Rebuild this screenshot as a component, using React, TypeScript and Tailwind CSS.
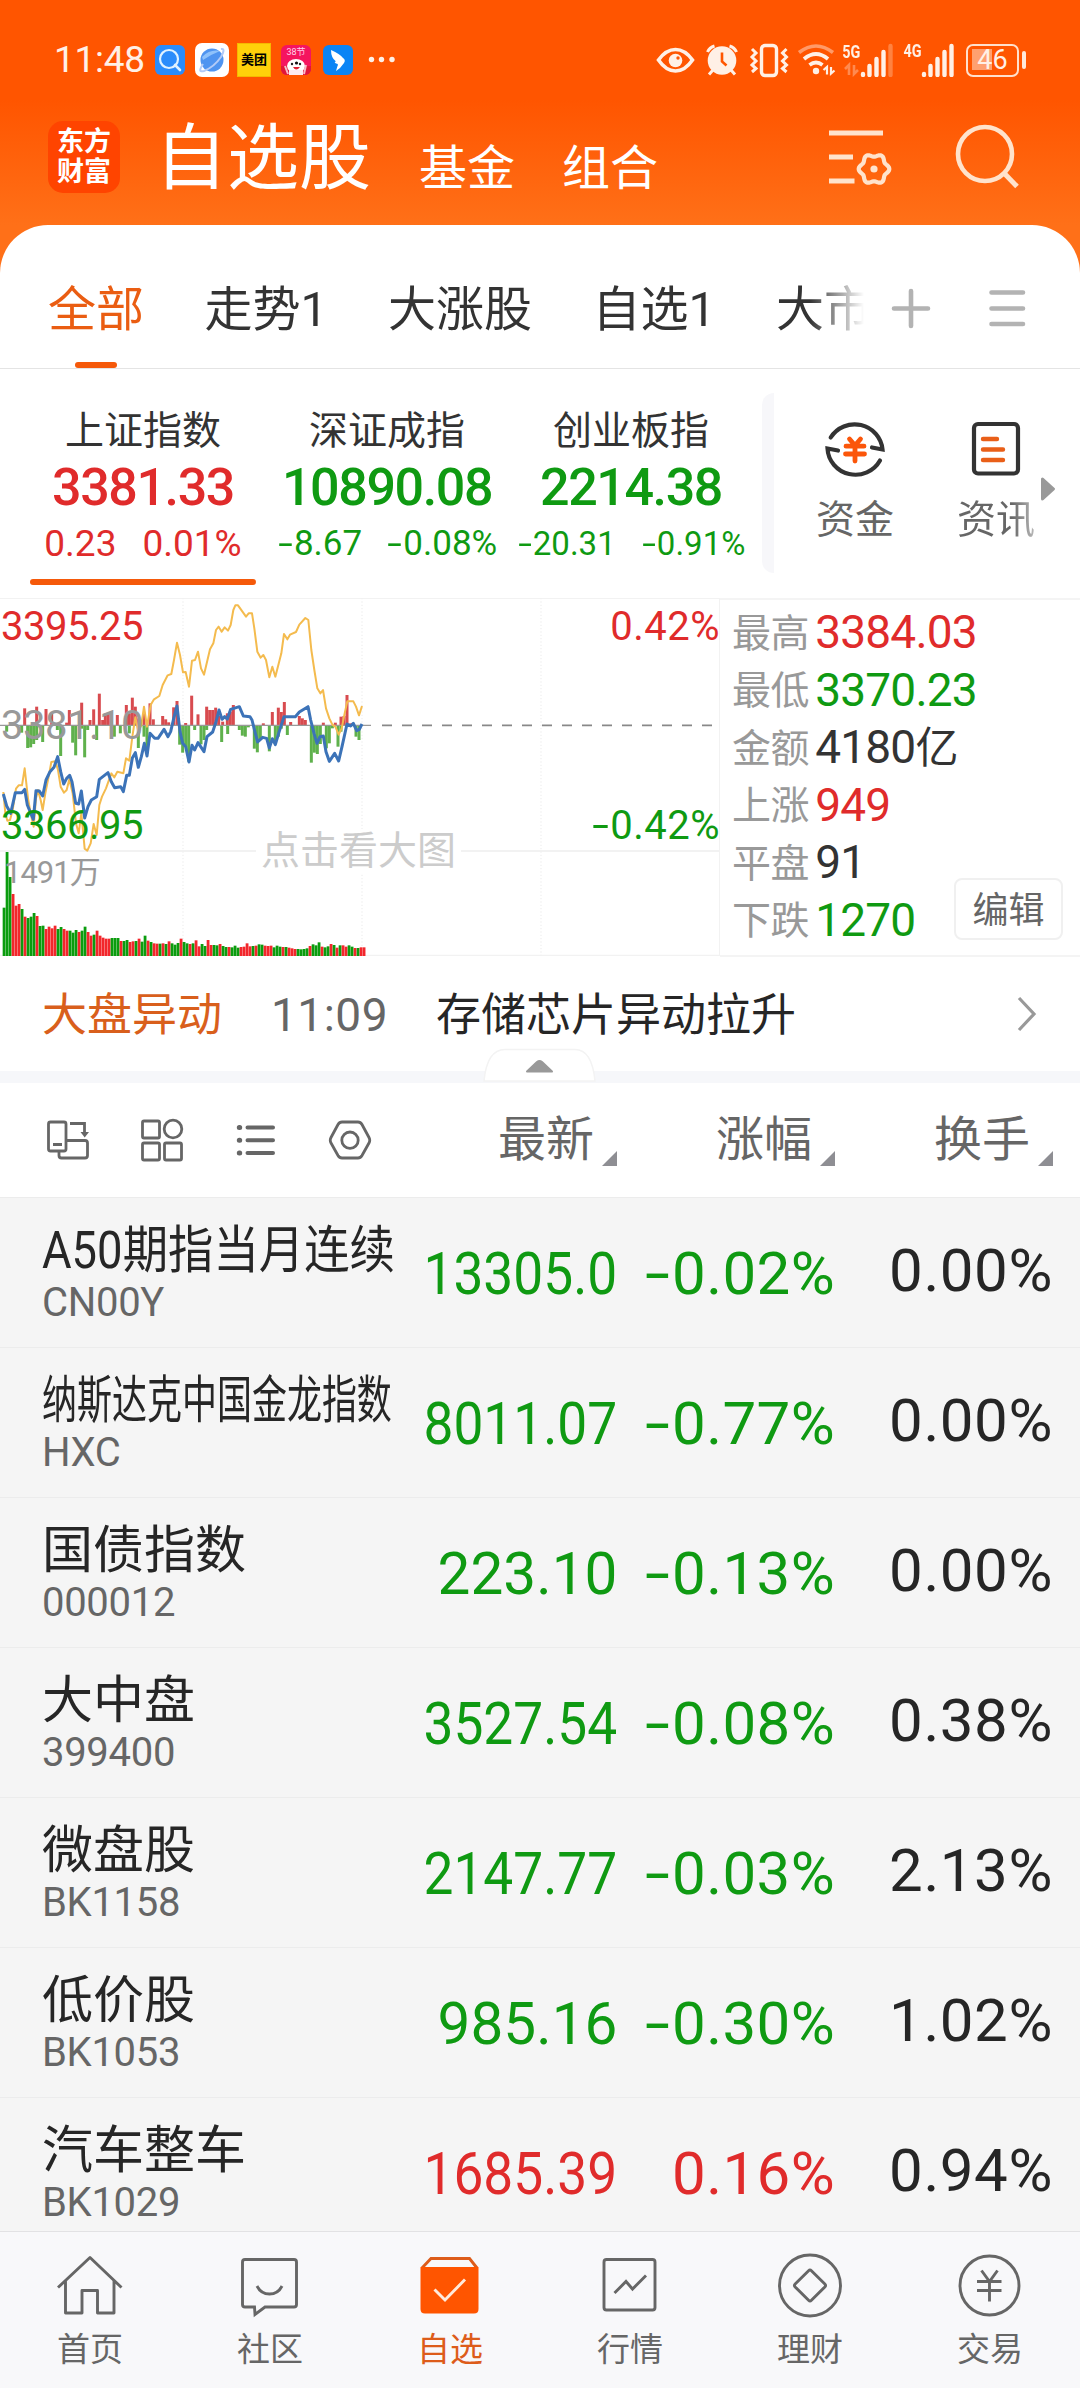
import type { ReactNode } from 'react';

const RED = 'text-[#e02b2b]';
const GREEN = 'text-[#0f9a12]';

/* A number whose leading minus is drawn as a wider, centred dash. */
function Num({ v }: { v: string }) {
  if (v[0] !== '-') return <>{v}</>;
  return (
    <>
      <span className="inline-block w-[0.49em] scale-x-[1.5] text-center">-</span>
      {v.slice(1)}
    </>
  );
}

function Icon({ box, className, children }: { box: string; className: string; children: ReactNode }) {
  return (
    <svg viewBox={box} className={'shrink-0 ' + className} fill="none" stroke="currentColor">
      {children}
    </svg>
  );
}

function StatusBar() {
  return (
    <div className="flex h-[120px] items-center pl-[54px] text-[#fff0e6]">
      <span className="w-[101px] text-[37px] tracking-[-0.3px]">11:48</span>
      <Icon box="0 0 30 30" className="h-[30px] w-[30px]">
        <rect width="30" height="30" rx="6" fill="#2a8cfb" stroke="none" />
        <circle cx="14" cy="14" r="9" stroke="#dff2ff" strokeWidth="2.2" />
        <path d="M20 20l5 5" stroke="#dff2ff" strokeWidth="2.6" strokeLinecap="round" />
      </Icon>
      <Icon box="0 0 34 34" className="ml-[10px] h-[34px] w-[34px]">
        <rect width="34" height="34" rx="7" fill="#fff" stroke="none" />
        <circle cx="17" cy="17" r="11.5" fill="#4f94f0" stroke="none" />
        <path d="M7 14q8-8 18-6q-8 3-17 9z" fill="#8fc2fb" stroke="none" />
        <path d="M8 21Q2 30 9 28Q19 24 26 14Q31 5 26 6" stroke="#b3cbf7" strokeWidth="2" />
      </Icon>
      <span className="ml-2 flex h-[34px] w-[34px] items-center justify-center border border-[#f5b800] bg-[#ffd00a] text-[13px] font-bold text-black">
        美团
      </span>
      <span className="ml-[10px] flex h-[30px] w-[30px] flex-col items-center overflow-hidden rounded-md bg-[#f5145f]">
        <span className="h-[13px] text-[9px] leading-[15px] text-[#ffd0ec]">38节</span>
        <Icon box="0 0 30 17" className="h-[17px] w-[30px]">
          <path d="M0 8h30v9H0z" fill="#e0163a" stroke="none" />
          <ellipse cx="15" cy="8" rx="9" ry="7" fill="#fff" stroke="none" />
          <path d="M8 12h14v5H8z" fill="#fdebf0" stroke="none" />
          <circle cx="11" cy="6" r="1.2" fill="#222" stroke="none" />
          <circle cx="19" cy="6" r="1.2" fill="#222" stroke="none" />
          <circle cx="15.500" cy="5" r="1.6" fill="#111" stroke="none" />
          <path d="M12 9q3 5 7 0z" fill="#e02034" stroke="none" />
          <path d="M25 7l-2 9M4 8l3 8" stroke="#f9b8c8" strokeWidth="2" />
        </Icon>
      </span>
      <Icon box="0 0 30 30" className="ml-3 h-[30px] w-[30px]">
        <rect width="30" height="30" rx="6" fill="#0a84f5" stroke="none" />
        <path d="M8 5Q17 9 20 13Q23 15 21 18L17 23L13 26L14.500 21Q16 19 13 18.500Q10.500 17 13 16.500Q8 13 8 5Z" fill="#fff" stroke="none" />
      </Icon>
      <Icon box="0 0 28 8" className="ml-[15px] h-[8px] w-[28px]">
        <g fill="currentColor" stroke="none">
          <circle cx="3.500" cy="3.500" r="2.7" />
          <circle cx="13.500" cy="3.500" r="2.7" />
          <circle cx="24" cy="3.500" r="2.7" />
        </g>
      </Icon>

      <Icon box="656 40 42 40" className="ml-[259px] h-[40px] w-[42px]">
        <path d="M659.500 60Q667 49.500 676.500 49.500T693.500 60Q686 71 676.500 71T659.500 60Z" strokeWidth="3.600" />
        <circle cx="676.500" cy="60.500" r="6.8" fill="currentColor" stroke="none" />
        <circle cx="679" cy="58" r="1.7" fill="#ff5500" stroke="none" />
      </Icon>
      <Icon box="704 40 40 40" className="ml-[6px] h-[40px] w-[40px]">
        <circle cx="723" cy="60.500" r="14.300" fill="currentColor" stroke="none" />
        <path d="M723 52.500V61.500l4.500 4" stroke="#ff5500" strokeWidth="2.6" />
        <path d="M708.500 52q2-4.500 7-6M737.500 52q-2-4.500-7-6M714 70l-4 4.500M732 70l4 4.500" strokeWidth="3" />
      </Icon>
      <Icon box="748 40 44 40" className="ml-1 h-[40px] w-[44px]">
        <rect x="762.500" y="45.500" width="15" height="30" rx="3.500" strokeWidth="3.400" />
        <path d="M753 49l4 4-4 4 4 4-4 4 4 3.500-4 3.500M787.500 49l-4 4 4 4-4 4 4 4-4 3.500 4 3.500" strokeWidth="3" />
      </Icon>
      <Icon box="796 40 42 40" className="ml-1 h-[40px] w-[42px]">
        <path d="M800 52.500q17-13 34 0" stroke="#ff9a68" strokeWidth="3.600" />
        <path d="M805 59q12-10 24 0M810.500 65q6.500-5 13 0" strokeWidth="3.800" />
        <circle cx="817" cy="71" r="3.200" fill="currentColor" stroke="none" />
        <path d="M824.500 70l3.500-3V74.500M835.500 70.500l-3.500 3V67" strokeWidth="2.200" />
      </Icon>
      <div className="ml-[6px] flex h-[34px] items-end">
        <div className="flex w-[17px] flex-col items-center">
          <span className="h-[15px] scale-x-[0.8] text-[18px] font-bold leading-[16px]">5G</span>
          <Icon box="0 0 16 16" className="mt-[2px] h-[16px] w-[16px] text-[#ff8a50]">
            <path d="M1 8l4-4v10M14 9l-4 4V4" strokeWidth="2.600" />
          </Icon>
        </div>
        <Icon box="0 0 34 34" className="h-[34px] w-[34px]">
          <path d="M3 32v-1M9.500 32v-9M16.500 32V16M23.500 32V9" strokeWidth="4.400" strokeLinecap="round" />
          <path d="M30.500 32V3" stroke="#ff8240" strokeWidth="4.400" strokeLinecap="round" />
        </Icon>
      </div>
      <div className="ml-[10px] flex h-[34px] items-start">
        <span className="flex w-[17px] scale-x-[0.8] justify-center text-[18px] font-bold leading-[16px]">4G</span>
        <Icon box="0 0 34 34" className="h-[34px] w-[34px]">
          <path d="M3 32v-1M9.500 32v-9M16.500 32V16M23.500 32V9M30.500 32V3" strokeWidth="4.400" strokeLinecap="round" />
        </Icon>
      </div>
      <div className="ml-[11px] flex items-center gap-[3px]">
        <div className="flex h-[33px] w-[53px] items-center rounded-[7px] border-[2.5px] border-[#ffe0cc] bg-[linear-gradient(#ffa070,#ffa070)] bg-[length:20px_21px] bg-[position:4px_3.500px] bg-no-repeat">
          <span className="w-full text-center text-[27px] leading-none">46</span>
        </div>
        <div className="h-[18px] w-[4px] rounded-sm bg-[#ffe8d9]" />
      </div>
    </div>
  );
}

const gearPath =
  Array.from({ length: 72 }, (_, i) => {
    const a = (i * Math.PI) / 36;
    const r = 13.8 + 1.5 * Math.cos(6 * a);
    return (i ? 'L' : 'M') + (876 + r * Math.cos(a)).toFixed(2) + ' ' + (169 + r * Math.sin(a)).toFixed(2);
  }).join('') + 'Z';

function Header() {
  return (
    <div className="flex h-[105px] items-start text-white">
      <div className="ml-[48px] mt-[1px] flex h-[72px] w-[72px] flex-col items-center justify-center rounded-[15px] bg-[#ff4400] text-[27px] font-bold leading-[30px]">
        <span>东方</span>
        <span>财富</span>
      </div>
      <span className="ml-[35px] text-[72px] leading-[78px]">自选股</span>
      <span className="ml-[48px] mt-[20px] text-[48px] leading-[58px]">基金</span>
      <span className="ml-[47px] mt-[20px] text-[48px] leading-[58px]">组合</span>
      <Icon box="826 120 72 72" className="ml-[166px] h-[72px] w-[72px] text-[#ffe3cc]">
        <path d="M831 133H885M831 157H855M831 181H856.500" strokeWidth="5" />
        <path d={gearPath} strokeWidth="4.200" strokeLinejoin="round" />
        <circle cx="876" cy="169" r="3.600" fill="currentColor" stroke="none" />
      </Icon>
      <Icon box="952 120 72 72" className="ml-[54px] h-[72px] w-[72px] text-[#ffe3cc]">
        <circle cx="987" cy="154" r="27" strokeWidth="4.600" />
        <path d="M1005 172L1019 186.500" strokeWidth="5" />
      </Icon>
    </div>
  );
}

function GroupTabs() {
  return (
    <div className="flex h-[144px] items-start border-b border-[#e4e4e4] text-[48px] text-[#333]">
      <div className="flex w-[874px] shrink-0 gap-[60.500px] whitespace-nowrap pl-[48px] [mask-image:linear-gradient(90deg,#000_810px,transparent_864px)]">
        <div className="flex flex-col items-center text-[#ea5d12]">
          <span className="mt-[52px] h-[66px] leading-[66px]">全部</span>
          <span className="mt-[19px] h-[6px] w-[42px] rounded-full bg-[#f5590a]" />
        </div>
        <span className="mt-[52px] leading-[66px]">走势1</span>
        <span className="mt-[52px] leading-[66px]">大涨股</span>
        <span className="mt-[52px] leading-[66px]">自选1</span>
        <span className="mt-[52px] leading-[66px]">大市</span>
      </div>
      <Icon box="890 286 44 44" className="ml-[15px] mt-[61px] h-[44px] w-[44px] text-[#b3b3b3]">
        <path d="M895 308.500H929M912 291V326" strokeWidth="4.600" strokeLinecap="round" />
      </Icon>
      <Icon box="986 286 44 44" className="ml-[52px] mt-[61px] h-[44px] w-[44px] text-[#b3b3b3]">
        <path d="M992.500 292.500H1024M992.500 308.500H1024M992.500 324H1024" strokeWidth="4.600" strokeLinecap="round" />
      </Icon>
    </div>
  );
}

const indices = [
  { name: '上证指数', value: '3381.33', diff: '0.23', pct: '0.01%', color: RED, size: 'text-[37px] gap-[26px]', on: true },
  { name: '深证成指', value: '10890.08', diff: '-8.67', pct: '-0.08%', color: GREEN, size: 'text-[35px] gap-[24px]', on: false },
  { name: '创业板指', value: '2214.38', diff: '-20.31', pct: '-0.91%', color: GREEN, size: 'text-[33px] gap-[25px]', on: false },
];

function Indices() {
  return (
    <div className="flex h-[229px] pl-[21px] pt-[24px]">
      {indices.map((x) => (
        <div key={x.name} className="flex w-[244px] shrink-0 flex-col items-center whitespace-nowrap pt-[8px]">
          <span className="text-[39px] leading-[60px] text-[#333]">{x.name}</span>
          <span className={'text-[52px] font-medium leading-[54px] tracking-[-1.4px] ' + x.color}>{x.value}</span>
          <span className={'flex leading-[58px] ' + x.size + ' ' + x.color}>
            <span><Num v={x.diff} /></span>
            <span><Num v={x.pct} /></span>
          </span>
          {x.on && <span className="mt-[6px] h-[6px] w-[226px] rounded-full bg-[#f5590a]" />}
        </div>
      ))}
      <div className="ml-[9px] h-[180px] w-[12px] shrink-0 rounded-l-[12px] bg-[#f7f7fa]" />
      <div className="ml-[40px] flex w-[82px] shrink-0 flex-col items-center pt-[24px]">
        <Icon box="824 418 64 64" className="h-[64px] w-[64px] text-[#333]">
          <path d="M831.700 438.500A28 27.500 0 0 1 883.500 450.500L873 448.500M881 461.500A28 27.500 0 0 1 828.500 449.500L839 451.500" strokeWidth="4.200" strokeLinecap="round" />
          <path d="M850.500 440L856 446.500L861.500 440M847 447.200H865M846.500 455H865.500M856 447V462" stroke="#fb560a" strokeWidth="4.800" strokeLinecap="round" />
        </Icon>
        <span className="mt-[9px] text-[39px] leading-[60px] text-[#666]">资金</span>
      </div>
      <div className="ml-[59px] flex w-[82px] shrink-0 flex-col items-center pt-[24px]">
        <Icon box="965 418 64 64" className="h-[64px] w-[64px]">
          <rect x="975" y="425" width="44" height="49.500" rx="4" stroke="#333" strokeWidth="4.200" />
          <path d="M984 440H998M984 450.500H1004M984 461H1004" stroke="#e95f18" strokeWidth="4.400" strokeLinecap="round" />
        </Icon>
        <span className="mt-[9px] bg-gradient-to-r from-[#666] from-70% to-[#bbb] bg-clip-text text-[39px] leading-[60px] text-transparent">资讯</span>
      </div>
      <Icon box="0 0 16 26" className="ml-[3px] mt-[83px] h-[26px] w-[16px] text-[#999]">
        <path d="M2.500 3V23L13.500 13Z" fill="currentColor" strokeWidth="3" strokeLinejoin="round" />
      </Icon>
    </div>
  );
}

/* Chart units are thirds of a pixel. Volume tops, one per bar, nine units apart. */
const volume = [
  953, 786, 861, 912, 947, 942, 957, 980, 984, 980, 969, 978, 1008, 1007, 1017, 1010, 1015, 1007, 1017, 1011,
  1017, 1022, 1022, 1028, 1020, 1026, 1022, 1010, 1026, 1037, 1034, 1022, 1037, 1043, 1046, 1046, 1044, 1044, 1044, 1053,
  1053, 1050, 1056, 1054, 1053, 1046, 1055, 1037, 1052, 1056, 1060, 1061, 1061, 1060, 1062, 1054, 1060, 1064, 1059, 1046,
  1056, 1060, 1062, 1060, 1051, 1069, 1062, 1068, 1050, 1065, 1065, 1066, 1062, 1068, 1071, 1071, 1072, 1067, 1073, 1071,
  1070, 1060, 1069, 1068, 1067, 1063, 1064, 1067, 1068, 1067, 1072, 1067, 1070, 1071, 1071, 1073, 1075, 1077, 1077, 1078,
  1077, 1075, 1068, 1063, 1066, 1057, 1070, 1072, 1069, 1062, 1065, 1073, 1066, 1066, 1070, 1066, 1070, 1074, 1074, 1072, 1072,
];
const volumeUp =
  '0001110100010011110011000100110111110001001101001011010100010010110011001001000111101001110001011100001000' +
  '100101011001011';

const upTicks = [
  [74, 355], [110, 350], [138, 357], [155, 372], [200, 398], [208, 360], [245, 338], [270, 390], [281, 358], [298, 311], [308, 390], [316, 370],
  [325, 370], [334, 392], [352, 375], [379, 345], [388, 370], [397, 323], [406, 350], [415, 385], [432, 372], [450, 340],
  [460, 388], [488, 378], [497, 388], [506, 397], [521, 352], [531, 333], [557, 399], [575, 317], [594, 373], [620, 350], [629, 360],
  [638, 360], [647, 353], [656, 378], [668, 395], [682, 370], [691, 365], [700, 345], [790, 400], [817, 366], [835, 353],
  [844, 366], [853, 336], [872, 396], [898, 378], [907, 385], [916, 390], [970, 398], [1006, 398], [1023, 380], [1032, 378],
  [1041, 315], [1052, 400],
];
const downTicks = [
  [20, 425], [65, 428], [83, 474], [92, 472], [101, 462], [110, 450], [128, 456], [172, 420], [182, 498], [218, 458], [227, 496], [245, 416],
  [254, 502], [263, 420], [290, 450], [343, 440], [361, 430], [388, 430], [415, 474], [432, 440], [441, 490], [539, 464],
  [548, 488], [557, 470], [566, 515], [584, 420], [603, 463], [612, 450], [620, 420], [665, 456], [683, 432], [718, 420],
  [727, 437], [736, 440], [745, 412], [763, 476], [772, 487], [781, 450], [808, 484], [826, 460], [835, 440], [844, 416],
  [862, 435], [934, 518], [943, 488], [952, 492], [961, 462], [979, 475], [988, 460], [997, 415], [1014, 470], [1023, 425],
  [1068, 440], [1077, 450],
];

const averageLine =
  '10,606 16,670 22,692 30,690 38,660 48,596 56,586 66,586 74,535 84,625 92,670 101,710 108,625 114,600 122,630 128,660 136,610 146,560 154,516 166,514 174,540 182,590 192,608 200,600 208,568 218,610 228,700 236,730 244,670 254,776 262,782 272,760 281,702 290,735 298,645 306,620 318,595 334,550 343,562 352,545 370,550 378,505 388,512 397,440 406,382 415,425 424,405 432,350 441,410 452,345 462,328 478,318 488,285 503,256 514,252 522,210 531,158 540,195 549,247 557,246 567,290 576,212 585,210 594,185 603,235 612,254 630,178 640,160 648,120 656,110 665,125 674,112 684,122 692,105 700,60 706,46 714,46 738,80 746,70 756,70 763,115 772,185 782,203 790,195 798,210 808,262 817,230 826,260 844,190 852,132 862,148 870,134 888,126 898,104 916,84 925,90 934,180 943,240 952,295 961,310 969,300 978,355 988,385 997,404 1006,410 1016,434 1025,415 1034,370 1042,334 1060,334 1068,350 1077,376 1086,348';
const priceLine =
  '10,612 20,648 32,670 40,635 46,608 66,608 74,598 82,645 100,688 108,602 118,603 128,618 138,570 150,545 162,532 173,500 182,545 191,582 200,565 209,556 216,575 227,640 236,642 244,603 254,684 264,650 274,630 290,620 298,568 324,548 334,575 344,593 362,590 370,605 380,556 388,556 397,504 406,488 415,532 424,500 433,460 441,498 450,430 464,445 474,445 492,418 504,440 512,425 520,390 531,348 540,425 548,460 557,470 567,516 576,466 584,480 594,458 612,485 621,440 638,426 648,395 657,360 666,388 674,380 682,387 692,358 718,350 730,378 750,380 756,390 766,430 773,456 788,442 800,445 808,474 817,446 826,464 836,430 852,380 886,380 898,366 924,350 932,390 942,430 951,460 960,440 970,438 978,485 988,514 1004,490 1016,513 1026,470 1041,402 1052,408 1060,400 1070,422 1078,418 1086,402';

function MinuteChart() {
  return (
    <div className="relative h-[358px] w-[720px] shrink-0">
      <svg viewBox="0 24 2160 1074" className="h-[358px] w-[720px]" fill="none">
        <path d="M0 24H2160M0 783H2160M0 1097H2160M2160 24V1098" stroke="#f2f2f2" strokeWidth="6" />
        <path d="M549 24V1098M1086 24V1098M1623 24V1098" stroke="#f0f0f0" strokeWidth="4" strokeDasharray="4 6" />
        {volume.map((top, i) => (
          <rect key={i} x={8 + 9 * i} y={top} width="8.400" height={1098 - top} fill={volumeUp[i] === '1' ? '#f2262b' : '#0a9c0e'} />
        ))}
        {upTicks.map(([x, y]) => (
          <rect key={'u' + x} x={x - 4.5} y={y} width="9" height={406 - y} fill="#d84b4f" />
        ))}
        {downTicks.map(([x, y]) => (
          <rect key={'d' + x} x={x - 4.5} y="406" width="9" height={y - 406} fill="#5fb14c" />
        ))}
        <path d="M0 406H1113" stroke="#999" strokeWidth="3.500" />
        <path d="M1146 406H2142" stroke="#888" strokeWidth="5" strokeDasharray="30 30" />
        <polyline points={averageLine} stroke="#f4bb4e" strokeWidth="6" strokeLinejoin="round" />
        <polyline points={priceLine} stroke="#3c73b8" strokeWidth="9" strokeLinejoin="round" />
      </svg>
      <div className={'absolute left-[1px] top-[6px] text-[40px] leading-[46px] tracking-[-0.5px] ' + RED}>3395.25</div>
      <div className="absolute left-[1px] top-[105px] text-[40px] leading-[46px] tracking-[-0.5px] text-[#999]">3381.10</div>
      <div className={'absolute left-[1px] top-[205px] text-[40px] leading-[46px] tracking-[-0.5px] ' + GREEN}>3366.95</div>
      <div className={'absolute right-0 top-[6px] text-[40px] leading-[46px] tracking-[0.5px] ' + RED}>0.42%</div>
      <div className={'absolute right-0 top-[205px] text-[40px] leading-[46px] tracking-[0.5px] ' + GREEN}>
        <Num v="-0.42%" />
      </div>
      <div className="absolute left-[4px] top-[255px] text-[31px] leading-[40px] tracking-[-1px] text-[#999]">1491万</div>
      <div className="absolute left-[256px] top-[231px] bg-white px-[5px] text-[39px] leading-[44px] text-[#ccc]">点击看大图</div>
    </div>
  );
}

const stats = [
  ['最高', '3384.03', RED],
  ['最低', '3370.23', GREEN],
  ['金额', '4180亿', 'text-[#333]'],
  ['上涨', '949', RED],
  ['平盘', '91', 'text-[#333]'],
  ['下跌', '1270', GREEN],
];

function MarketPanel() {
  return (
    <div className="flex h-[359px]">
      <MinuteChart />
      <div className="relative flex-1 border-y-2 border-[#f4f4f4] pl-[12px] pt-[4px]">
        {stats.map(([label, value, color]) => (
          <div key={label} className="flex h-[57.500px] items-center gap-[6px] whitespace-nowrap">
            <span className="mt-[2px] text-[39px] tracking-[-0.4px] text-[#999]">{label}</span>
            <span className={'text-[46px] tracking-[-0.8px] ' + color}>
              {value.replace('亿', '')}
              {value.endsWith('亿') && <span className="text-[43px]">亿</span>}
            </span>
          </div>
        ))}
        <div className="absolute left-[234px] top-[278px] flex h-[62px] w-[109px] items-center justify-center rounded-lg border-2 border-[#f0f0f0] bg-white pt-[3px] text-[36px] text-[#666]">
          编辑
        </div>
      </div>
    </div>
  );
}

function NewsRow() {
  return (
    <div className="relative flex h-[126px] items-start border-b-[12px] border-[#f6f7fa] text-[45px] leading-[60px]">
      <span className="ml-[42px] mt-[29px] text-[#d95f1c]">大盘异动</span>
      <span className="ml-[49px] mt-[28px] w-[165px] text-[46px] tracking-[0.5px] text-[#666]">11:09</span>
      <span className="mt-[29px] text-[#262626]">存储芯片异动拉升</span>
      <Icon box="0 0 24 40" className="ml-[218px] mt-[37px] h-[40px] w-[24px] text-[#999]">
        <path d="M5 4L20 20L5 36" strokeWidth="3.200" />
      </Icon>
      <svg viewBox="482 1048 116 36" className="absolute left-[482px] top-[91px] h-[36px] w-[116px]">
        <path d="M484 1081Q487 1049.500 505 1049.500H575Q592 1049.500 595 1081Z" fill="#fff" stroke="#f3f3f3" strokeWidth="1.500" />
        <path d="M527 1071.500L537 1062Q539.500 1060 542 1062L552 1071.500Z" fill="#999" stroke="#999" strokeWidth="2" strokeLinejoin="round" />
      </svg>
    </div>
  );
}

function ColumnTitle({ children }: { children: string }) {
  return (
    <div className="flex w-[218px] items-end justify-end">
      <span className="text-[48px] leading-[60px]">{children}</span>
      <Icon box="0 0 15 15" className="mb-[4px] ml-[8px] h-[15px] w-[15px]">
        <path d="M15 0V15H0Z" fill="#8e8e93" stroke="none" />
      </Icon>
    </div>
  );
}

function TableHead() {
  return (
    <div className="flex h-[114px] items-center pl-[46px] pr-[27px] text-[#666]">
      <Icon box="46 1118 44 44" className="h-[44px] w-[44px]">
        <rect x="48.500" y="1122" width="17.500" height="29" rx="2" strokeWidth="2.800" />
        <path d="M53 1144.500H62M59 1152V1155.500Q59 1158 61.500 1158H85Q87.500 1158 87.500 1155.500V1143Q87.500 1140.500 85 1140.500H67M70 1123.500H84.500V1134" strokeWidth="2.800" />
        <path d="M80.500 1132H89L84.700 1137.500Z" fill="currentColor" stroke="none" />
      </Icon>
      <Icon box="140 1118 44 44" className="ml-[50px] h-[44px] w-[44px]">
        <g strokeWidth="2.800">
          <rect x="142.500" y="1121" width="17" height="17" rx="1.500" />
          <circle cx="173" cy="1129" r="8.800" />
          <rect x="142.500" y="1143" width="17" height="17" rx="1.500" />
          <rect x="164.500" y="1143" width="17" height="17" rx="1.500" />
        </g>
      </Icon>
      <Icon box="234 1118 44 44" className="ml-[50px] h-[44px] w-[44px]">
        <path d="M247.500 1127.500H273M247.500 1140.300H273M247.500 1153H273" strokeWidth="4" strokeLinecap="round" />
        <path d="M239.300 1127.500h.4M239.300 1140.300h.4M239.300 1153h.4" strokeWidth="5" strokeLinecap="round" />
      </Icon>
      <Icon box="328 1118 44 44" className="ml-[50px] h-[44px] w-[44px]">
        <path d="M342 1122H358Q360.500 1122 362 1124.500L369 1137.500Q370.500 1140.200 369 1143L362 1155.500Q360.500 1158 358 1158H342Q339.500 1158 338 1155.500L331 1143Q329.500 1140.200 331 1137.500L338 1124.500Q339.500 1122 342 1122Z" strokeWidth="2.800" />
        <circle cx="350" cy="1140.200" r="8.200" strokeWidth="2.800" />
      </Icon>
      <div className="ml-auto flex">
        <ColumnTitle>最新</ColumnTitle>
        <ColumnTitle>涨幅</ColumnTitle>
        <ColumnTitle>换手</ColumnTitle>
      </div>
    </div>
  );
}

const NARROW = 'scale-x-[0.888]';
const NORMAL = 'scale-x-[0.975]';
const rows = [
  { name: 'A50期指当月连续', fit: 'scale-x-[0.890]', code: 'CN00Y', price: '13305.0', pfit: NARROW, pct: '-0.02%', turn: '0.00%', color: GREEN },
  { name: '纳斯达克中国金龙指数', fit: 'scale-x-[0.686]', code: 'HXC', price: '8011.07', pfit: NARROW, pct: '-0.77%', turn: '0.00%', color: GREEN },
  { name: '国债指数', fit: '', code: '000012', price: '223.10', pfit: NORMAL, pct: '-0.13%', turn: '0.00%', color: GREEN },
  { name: '大中盘', fit: '', code: '399400', price: '3527.54', pfit: NARROW, pct: '-0.08%', turn: '0.38%', color: GREEN },
  { name: '微盘股', fit: '', code: 'BK1158', price: '2147.77', pfit: NARROW, pct: '-0.03%', turn: '2.13%', color: GREEN },
  { name: '低价股', fit: '', code: 'BK1053', price: '985.16', pfit: NORMAL, pct: '-0.30%', turn: '1.02%', color: GREEN },
  { name: '汽车整车', fit: '', code: 'BK1029', price: '1685.39', pfit: NARROW, pct: '0.16%', turn: '0.94%', color: RED },
];

function StockTable() {
  return (
    <div className="h-[1034px] overflow-hidden border-t border-[#ececec] bg-[#f5f5f5]">
      {rows.map((r) => (
        <div key={r.code} className="flex h-[150px] whitespace-nowrap border-b border-[#ececec] text-[60px] leading-[70px]">
          <div className="flex w-[357px] shrink-0 flex-col pl-[42px] pt-[23px]">
            <span className={'w-max origin-left text-[51px] leading-[60px] text-[#262626] ' + r.fit}>{r.name}</span>
            <span className="text-[40px] leading-[44px] tracking-[-0.3px] text-[#666]">{r.code}</span>
          </div>
          <div className={'flex w-[260px] shrink-0 justify-end pt-[41px] ' + r.color}>
            <span className={'origin-right ' + r.pfit}>{r.price}</span>
          </div>
          <div className={'w-[218px] shrink-0 pt-[41px] text-right tracking-[0.4px] ' + r.color}>
            <Num v={r.pct} />
          </div>
          <div className="w-[218px] shrink-0 pt-[38px] text-right tracking-[0.6px] text-[#262626]">{r.turn}</div>
        </div>
      ))}
    </div>
  );
}

function NavItem({ box, label, active, children }: { box: string; label: string; active?: boolean; children: ReactNode }) {
  return (
    <div className={'flex w-[180px] flex-col items-center pt-[19px] ' + (active ? 'text-[#dd5c1a]' : 'text-[#666]')}>
      <Icon box={box} className="h-[70px] w-[70px]">
        <g strokeWidth="2.900">{children}</g>
      </Icon>
      <span className="mt-[7px] text-[33px] leading-[44px]">{label}</span>
    </div>
  );
}

function BottomNav() {
  return (
    <div className="flex h-[157px] border-t border-[#e2e2e4] bg-[#f8f8fa]">
      <NavItem box="55 2251 70 70" label="首页">
        <path d="M58 2287.500L90 2257.500L121.500 2287.500M65.500 2281V2313H82V2290.500H97.500V2313H114V2281" strokeLinejoin="round" />
      </NavItem>
      <NavItem box="235 2251 70 70" label="社区">
        <path d="M245 2259.500H294Q296.500 2259.500 296.500 2262V2304.500Q296.500 2307 294 2307H265L255 2314.500L254.500 2307H245Q242.500 2307 242.500 2304.500V2262Q242.500 2259.500 245 2259.500ZM257 2286Q261 2294 269.500 2294T282 2286" />
      </NavItem>
      <NavItem box="415 2251 70 70" label="自选" active>
        <path d="M422 2268L431 2258.500H469.500L477 2268" />
        <path d="M420.500 2267H478.500V2309Q478.500 2313.500 474 2313.500H425Q420.500 2313.500 420.500 2309Z" fill="#ff5500" stroke="none" />
        <path d="M434.500 2289.500L445 2300L465 2279.500" stroke="#ffeadb" />
      </NavItem>
      <NavItem box="595 2251 70 70" label="行情">
        <rect x="604" y="2259.500" width="51" height="50.500" rx="2.500" />
        <path d="M614.500 2293L626 2281.500L632.500 2289L646 2275.500" />
      </NavItem>
      <NavItem box="775 2251 70 70" label="理财">
        <circle cx="810" cy="2285.500" r="30.500" />
        <rect x="798.500" y="2274" width="23" height="23" rx="2" transform="rotate(45 810 2285.500)" />
      </NavItem>
      <NavItem box="955 2251 70 70" label="交易">
        <circle cx="989.500" cy="2285.500" r="29.500" />
        <path d="M981.500 2270.500L989.500 2281.500L997.500 2270.500M977 2281.500H1001.500M977 2290.500H1001.500M989.500 2281.500V2301.500" />
      </NavItem>
    </div>
  );
}

export default function App() {
  return (
    <div className="h-[2388px] w-[1080px] overflow-hidden bg-[linear-gradient(#ff5500_0px,#ff5500_100px,#ff7018_225px)] font-['Roboto','Noto_Sans_CJK_SC',sans-serif]">
      <StatusBar />
      <Header />
      <div className="rounded-t-[48px] bg-white">
        <GroupTabs />
        <Indices />
        <MarketPanel />
        <NewsRow />
        <TableHead />
        <StockTable />
        <BottomNav />
      </div>
    </div>
  );
}
